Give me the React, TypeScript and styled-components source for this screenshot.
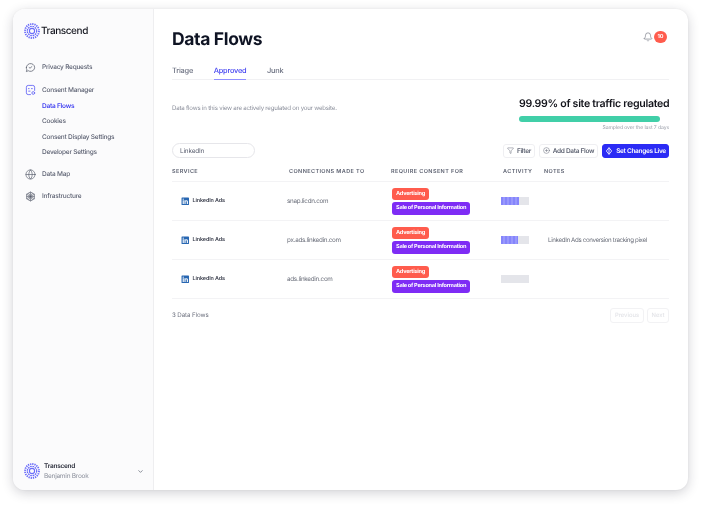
import React from "react";
import styled, { createGlobalStyle } from "styled-components";
import { Bell, ChevronDown, Filter, CirclePlus, Globe } from "lucide-react";
import { FaLinkedin } from "react-icons/fa";

const Global = createGlobalStyle`
  html, body { margin: 0; padding: 0; background: #fff; }
  body { font-family: Inter, "Liberation Sans", sans-serif; overflow: hidden; text-rendering: geometricPrecision; }
  * { box-sizing: border-box; }
`;
const Page = styled.div`
  width: 701px; height: 506px; padding: 9px 13px 16px;
`;
const Card = styled.div`
  width: 675px; height: 481px; display: flex; border-radius: 12px; overflow: hidden; background: #fff;
  box-shadow: 0 3px 12px rgba(30, 30, 50, .2), 0 0 3px rgba(30, 30, 50, .06);
  filter: blur(.35px);
`;
const Sidebar = styled.aside`
  width: 141px; flex: none; display: flex; flex-direction: column; background: #fbfbfc;
  border-right: 1px solid #eeeef0; padding: 14px 0 11px 11px;
`;
const Brand = styled.div`
  display: flex; align-items: center; gap: 1px; height: 16px; margin-bottom: 20px;
  font-size: 10px; font-weight: 500; color: #14161f; letter-spacing: -.42px;
`;
const Nav = styled.nav`
  display: flex; flex-direction: column; flex: 1;
`;
const NavItem = styled.div<{ $gap?: number }>`
  display: flex; align-items: center; gap: 6px; height: 16px; margin-top: ${p => p.$gap ?? 0}px;
  font-size: 6.5px; font-weight: 500; letter-spacing: -.22px; color: #5a5f70; padding-left: 1px;
  svg { flex: none; }
`;
const SubList = styled.div`
  display: flex; flex-direction: column;
`;
const SubItem = styled.div<{ $active?: boolean }>`
  height: 15.5px; display: flex; align-items: center; padding-left: 18px;
  font-size: 6.5px; letter-spacing: -.22px; font-weight: ${p => (p.$active ? 600 : 500)}; color: ${p => (p.$active ? "#3f3ff0" : "#5a5f70")};
`;
const Account = styled.div`
  display: flex; align-items: center; gap: 4px; height: 16px; padding-right: 9px;
`;
const AccountText = styled.div`
  flex: 1; display: flex; flex-direction: column; gap: 3px; font-size: 6.5px; line-height: 7px; letter-spacing: -.25px;
`;
const AccountName = styled.span`font-weight: 600; color: #2a2d3a;`;
const AccountUser = styled.span`color: #8c909c;`;
const Main = styled.main`
  flex: 1; min-width: 0; padding: 17px 19px 0 18px; display: flex; flex-direction: column;
`;
const Header = styled.header`
  display: flex; justify-content: space-between; align-items: center; height: 26px; margin-bottom: 11px;
`;
const Title = styled.h1`
  margin: 2px 0 0; font-size: 17.5px; line-height: 24px; font-weight: 700; color: #0f1424; letter-spacing: -.35px;
`;
const Notice = styled.div`
  display: flex; align-items: center; gap: 1px; margin-right: 2px; margin-top: -5px; color: #6b6f7c;
`;
const Badge = styled.span`
  width: 13px; height: 12px; border-radius: 6px; background: #ff5c4d; color: #fff;
  font-size: 5.5px; font-weight: 700; display: flex; align-items: center; justify-content: center;
`;
const Tabs = styled.div`
  display: flex; gap: 20.5px; height: 17px; border-bottom: 1px solid #f1f1f3;
`;
const Tab = styled.div<{ $active?: boolean }>`
  font-size: 7.4px; line-height: 16px; font-weight: 500; height: 17px; letter-spacing: -.2px;
  color: ${p => (p.$active ? "#3f3ff0" : "#6b7080")};
  border-bottom: 1px solid ${p => (p.$active ? "#8f8fff" : "transparent")};
`;
const Summary = styled.section`
  display: flex; justify-content: space-between; align-items: flex-start; margin-top: 16px; height: 43px;
`;
const Description = styled.p`
  margin: 9px 0 0; font-size: 6.1px; line-height: 8px; letter-spacing: -.2px; color: #8a8e9a;
`;
const Traffic = styled.div`
  width: 150px; display: flex; flex-direction: column;
`;
const TrafficTitle = styled.div`
  font-size: 10.6px; line-height: 15px; font-weight: 600; color: #14151c; white-space: nowrap; letter-spacing: -.3px;
`;
const Meter = styled.div`
  width: 141px; height: 6px; margin-top: 5px; border-radius: 3px; background: #41cfa8;
`;
const MeterNote = styled.div`
  margin-top: 2px; font-size: 5.1px; line-height: 8px; letter-spacing: -.1px; color: #9a9ea9; text-align: right; white-space: nowrap;
`;
const Toolbar = styled.div`
  display: flex; align-items: center; height: 15px; margin-top: 4px;
`;
const Search = styled.div`
  width: 83px; height: 15px; margin-right: auto; border: 1px solid #e6e6ea; border-radius: 8px;
  padding-left: 7px; display: flex; align-items: center; font-size: 6.4px; letter-spacing: -.15px; color: #5a5f70; background: #fff;
`;
const Btn = styled.div<{ $primary?: boolean; $w: number }>`
  width: ${p => p.$w}px; height: 14px; margin-left: 4px; border-radius: 3px; display: flex; align-items: center;
  justify-content: center; gap: 3px; font-size: 6.5px; font-weight: 600; white-space: nowrap; letter-spacing: -.3px;
  border: 1px solid ${p => (p.$primary ? "#2b2bf5" : "#efeff2")};
  background: ${p => (p.$primary ? "#2b2bf5" : "#fff")};
  color: ${p => (p.$primary ? "#fff" : "#5f6473")};
`;
const Columns = "115px 104px 110px 43px 1fr";
const TableHead = styled.div`
  display: grid; grid-template-columns: ${Columns}; height: 24px; align-items: center;
  border-bottom: 1px solid #f3f3f5; padding-top: 7px; padding-bottom: 2px;
`;
const Th = styled.div<{ $pad?: number }>`
  padding-left: ${p => p.$pad ?? 0}px; font-size: 5.5px; font-weight: 600; letter-spacing: .4px; color: #5d6271; white-space: nowrap;
`;
const Row = styled.div`
  display: grid; grid-template-columns: ${Columns}; height: 39px; align-items: center; border-bottom: 1px solid #f3f3f5;
`;
const Service = styled.div`
  display: flex; align-items: center; gap: 3px; padding-left: 9px; font-size: 5.4px; font-weight: 600; letter-spacing: -.1px; color: #3b3f4d;
  svg { color: #2867b2; }
`;
const Conn = styled.div`font-size: 6.3px; letter-spacing: -.28px; color: #6a6e7a;`;
const Tags = styled.div`
  display: flex; flex-direction: column; align-items: flex-start; gap: 2px; padding-left: 1px;
`;
const Tag = styled.span<{ $purple?: boolean }>`
  height: 12.5px; padding: 0 4px; border-radius: 3px; display: flex; align-items: center;
  font-size: 5.6px; font-weight: 700; letter-spacing: -.25px; color: #fff; white-space: nowrap;
  background: ${p => (p.$purple ? "#7e2cf5" : "#ff5c4d")};
`;
const Activity = styled.div`
  width: 28px; height: 8px; background: #e4e5ea; overflow: hidden;
`;
const ActivityFill = styled.div`
  height: 100%;
  background: repeating-linear-gradient(90deg, #8585fb 0 2px, #9898fc 2px 4px);
`;
const Note = styled.div`padding-left: 4px; font-size: 6.2px; letter-spacing: -.36px; color: #666a76; white-space: nowrap;`;
const Footer = styled.div`
  display: flex; align-items: center; justify-content: space-between; height: 15px; margin-top: 9px;
`;
const Count = styled.div`font-size: 6.2px; letter-spacing: -.1px; color: #6f7380;`;
const Pager = styled.div`display: flex; gap: 3px;`;
const PageBtn = styled.div<{ $w: number }>`
  width: ${p => p.$w}px; height: 15px; border: 1px solid #f2f2f4; border-radius: 3px; display: flex; align-items: center;
  justify-content: center; font-size: 5.8px; font-weight: 500; color: #e2e3e7;
`;

const Logo = ({ size = 16 }: { size?: number }) => (
  <svg width={size} height={size} viewBox="0 0 32 32" fill="none" stroke="#6a6cfa">
    <circle cx="16" cy="16" r="14" strokeWidth="3.6" strokeDasharray="2.6 1.8" />
    <circle cx="16" cy="16" r="9.4" strokeWidth="2.6" strokeDasharray="3.4 1.5" />
    <circle cx="16" cy="16" r="5.2" strokeWidth="2.2" />
  </svg>
);
const ChatIcon = () => (
  <svg width="11" height="11" viewBox="0 0 24 24" fill="none" stroke="#5f6473" strokeWidth="1.7" strokeLinecap="round" strokeLinejoin="round">
    <path d="M3 12a9 8.5 0 1 1 4 7l-4 2 1-4.2A8 8 0 0 1 3 12Z" />
    <path d="m9 12 2 1.6 4-3.6" />
  </svg>
);
const ConsentIcon = () => (
  <svg width="11" height="12" viewBox="0 0 24 24" fill="none" stroke="#5d5ff5" strokeWidth="1.8" strokeLinecap="round" strokeLinejoin="round">
    <path d="M12 22H7a4 4 0 0 1-4-4V6a4 4 0 0 1 4-4h10a4 4 0 0 1 4 4v7" />
    <path d="M7.5 9h1.5M14 9h2M8 14.5h3" />
    <circle cx="18" cy="18.5" r="3" />
  </svg>
);
const InfraIcon = () => (
  <svg width="11" height="11" viewBox="0 0 24 24" fill="none" stroke="#5f6473" strokeWidth="1.5">
    <path d="M12 2 20.5 7v10L12 22l-8.5-5V7Z" />
    <path d="M12 2v20M3.5 7l17 10M20.5 7l-17 10" />
    <path d="M7.7 4.5 16.3 19.5M16.3 4.5 7.7 19.5M3.5 12h17" />
  </svg>
);
const Spark = () => (
  <svg width="8" height="8" viewBox="0 0 24 24" fill="none" stroke="#fff" strokeWidth="2.4" strokeLinejoin="round">
    <path d="M12 2 20 12 12 22 4 12Z" />
    <path d="M12 2v20" />
  </svg>
);

const rows = [
  { host: "snap.licdn.com", pct: 64 },
  { host: "px.ads.linkedin.com", pct: 60, note: "LinkedIn Ads conversion tracking pixel" },
  { host: "ads.linkedin.com", pct: 0 },
];

export default function App() {
  return (
    <Page>
      <Global />
      <Card>
        <Sidebar>
          <Brand><Logo />Transcend</Brand>
          <Nav>
            <NavItem><ChatIcon />Privacy Requests</NavItem>
            <NavItem $gap={7}><ConsentIcon />Consent Manager</NavItem>
            <SubList>
              <SubItem $active>Data Flows</SubItem>
              <SubItem>Cookies</SubItem>
              <SubItem>Consent Display Settings</SubItem>
              <SubItem>Developer Settings</SubItem>
            </SubList>
            <NavItem $gap={6}><Globe size={11} strokeWidth={1.5} color="#5f6473" />Data Map</NavItem>
            <NavItem $gap={6}><InfraIcon />Infrastructure</NavItem>
          </Nav>
          <Account>
            <Logo />
            <AccountText>
              <AccountName>Transcend</AccountName>
              <AccountUser>Benjamin Brook</AccountUser>
            </AccountText>
            <ChevronDown size={7} strokeWidth={2.4} color="#5f6473" />
          </Account>
        </Sidebar>
        <Main>
          <Header>
            <Title>Data Flows</Title>
            <Notice><Bell size={10} strokeWidth={1.5} /><Badge>10</Badge></Notice>
          </Header>
          <Tabs>
            <Tab>Triage</Tab>
            <Tab $active>Approved</Tab>
            <Tab>Junk</Tab>
          </Tabs>
          <Summary>
            <Description>Data flows in this view are actively regulated on your website.</Description>
            <Traffic>
              <TrafficTitle>99.99% of site traffic regulated</TrafficTitle>
              <Meter />
              <MeterNote>Sampled over the last 7 days</MeterNote>
            </Traffic>
          </Summary>
          <Toolbar>
            <Search>LinkedIn</Search>
            <Btn $w={32}><Filter size={7} strokeWidth={1.6} />Filter</Btn>
            <Btn $w={59}><CirclePlus size={7} strokeWidth={1.6} />Add Data Flow</Btn>
            <Btn $w={67} $primary><Spark />Set Changes Live</Btn>
          </Toolbar>
          <TableHead>
            <Th>SERVICE</Th>
            <Th $pad={2}>CONNECTIONS MADE TO</Th>
            <Th>REQUIRE CONSENT FOR</Th>
            <Th $pad={2}>ACTIVITY</Th>
            <Th>NOTES</Th>
          </TableHead>
          {rows.map(r => (
            <Row key={r.host}>
              <Service><FaLinkedin size={8.5} />LinkedIn Ads</Service>
              <Conn>{r.host}</Conn>
              <Tags>
                <Tag>Advertising</Tag>
                <Tag $purple>Sale of Personal Information</Tag>
              </Tags>
              <Activity><ActivityFill style={{ width: `${r.pct}%` }} /></Activity>
              <Note>{r.note}</Note>
            </Row>
          ))}
          <Footer>
            <Count>3 Data Flows</Count>
            <Pager>
              <PageBtn $w={34}>Previous</PageBtn>
              <PageBtn $w={22}>Next</PageBtn>
            </Pager>
          </Footer>
        </Main>
      </Card>
    </Page>
  );
}
